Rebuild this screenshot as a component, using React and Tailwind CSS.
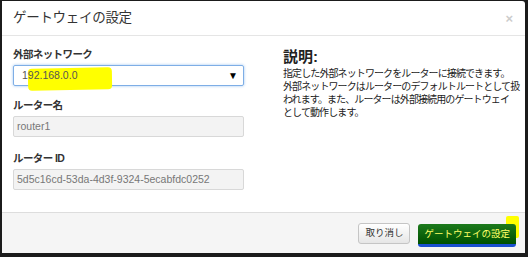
import { useState } from 'react'

const font = { fontFamily: '"Liberation Sans", "Noto Sans CJK JP", sans-serif' }

const Field = ({ label, children, className = '' }) => (
  <div className={`flex flex-col ${className}`}>
    <label className="text-[10.5px] leading-[16px] font-bold text-[#333] tracking-[-0.6px] mb-[3px]">{label}</label>
    {children}
  </div>
)

export default function App() {
  const [network] = useState('192.168.0.0')

  return (
    <div className="w-[528px] h-[257px] bg-[#1b1b1b] pl-[2px] pt-[1px] pr-[3px] pb-[4px]" style={font}>
      <div className="h-full bg-white flex flex-col rounded-tr-[3px]">
        {/* Header */}
        <div className="h-[35px] flex items-center justify-between border-b border-[#e5e5e5] pl-[11px] pr-[12px]">
          <h3 className="text-[13.5px] leading-none text-[#333] tracking-[-0.3px]">ゲートウェイの設定</h3>
          <span className="text-[13px] leading-none font-bold text-[#cccccc]">×</span>
        </div>

        {/* Body */}
        <div className="flex-1 flex pl-[11px] pt-[10px]">
          <div className="w-[231px] shrink-0 flex flex-col">
            <Field label="外部ネットワーク">
              <div className="relative h-[21px] border border-[#7eaee6] rounded-[2px] flex items-center justify-between px-[4px] shadow-[0_0_3px_#9cc3f0]">
                <div className="absolute left-[14px] top-[2px] w-[84px] h-[22px] bg-[#ffff00] rounded-[4px] -rotate-1" />
                <span className="relative text-[10.5px] text-[#555] pl-[4px]">{network}</span>
                <span className="text-[10px] text-black pr-[1px]">▼</span>
              </div>
            </Field>
            <Field label="ルーター名" className="mt-[11px]">
              <div className="h-[21px] border border-[#d8d8d8] rounded-[2px] bg-[#f3f3f3] flex items-center px-[3px] text-[10.5px] text-[#777]">
                router1
              </div>
            </Field>
            <Field label="ルーター ID" className="mt-[13px]">
              <div className="h-[21px] border border-[#d8d8d8] rounded-[2px] bg-[#f3f3f3] flex items-center px-[3px] text-[10.5px] text-[#777]">
                5d5c16cd-53da-4d3f-9324-5ecabfdc0252
              </div>
            </Field>
          </div>

          <div className="ml-[39px] pt-[1px]">
            <h4 className="text-[15px] leading-[20px] font-bold text-[#222]">説明:</h4>
            <p className="text-[10px] leading-[13px] text-[#222] tracking-[-0.9px] whitespace-nowrap">
              指定した外部ネットワークをルーターに接続できます。
              <br />
              外部ネットワークはルーターのデフォルトルートとして扱
              <br />
              われます。また、ルーターは外部接続用のゲートウェイ
              <br />
              として動作します。
            </p>
          </div>
        </div>

        {/* Footer */}
        <div className="h-[41px] bg-[#f5f5f5] border-t border-[#dddddd] flex items-center justify-end gap-[8px] pr-[9px] pt-[1px]">
          <button className="h-[21px] px-[6px] text-[9.5px] text-[#333] bg-gradient-to-b from-white to-[#e6e6e6] border border-[#c5c5c5] rounded-[3px]">
            取り消し
          </button>
          <div className="relative">
            <div className="absolute right-[-3px] top-[-4px] w-[13px] h-[22px] bg-[#ffff00] rounded-[2px]" />
            <button className="relative h-[23px] px-[6px] text-[9.5px] text-[#ffff66] bg-gradient-to-b from-[#1c7a1c] to-[#005000] border-b-[3px] border-[#1a4fd0] rounded-[3px]">
              ゲートウェイの設定
            </button>
          </div>
        </div>
      </div>
    </div>
  )
}
